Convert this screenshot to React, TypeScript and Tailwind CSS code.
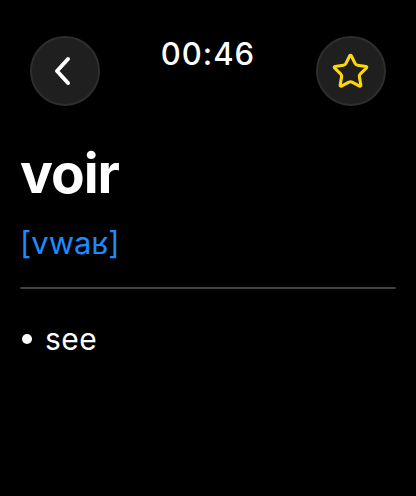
import { Star } from "lucide-react"

const ChevronLeft = () => (
  <svg width="22" height="30" viewBox="0 0 22 30" fill="none">
    <path d="M16 3 L5 15 L16 27" stroke="white" strokeWidth="4" strokeLinecap="round" strokeLinejoin="round" />
  </svg>
)

export default function App() {
  return (
    <div
      className="w-[416px] h-[496px] bg-black text-white overflow-hidden"
      style={{ fontFamily: "Inter, 'Liberation Sans', sans-serif" }}
    >
      {/* Top bar */}
      <div className="flex items-start justify-between px-[30px] pt-[36px]">
        <button className="w-[70px] h-[70px] rounded-full bg-[#1f1f1f] border-2 border-[#2e2e2e] flex items-center justify-center pr-[4px]">
          <ChevronLeft />
        </button>
        <div className="mt-[2px] text-[31px] font-medium tracking-[1px] leading-none">
          00:46
        </div>
        <button className="w-[70px] h-[70px] rounded-full bg-[#1f1f1f] border-2 border-[#2e2e2e] flex items-center justify-center">
          <Star className="w-[39px] h-[39px] text-[#ffd60a]" strokeWidth={1.9} strokeLinejoin="miter" />
        </button>
      </div>

      {/* Word */}
      <div className="px-[20px] mt-[40px]">
        <h1 className="text-[55px] font-bold leading-none tracking-[-1px]">voir</h1>
        <p className="mt-[26px] text-[31px] leading-none text-[#1a8cff]">[vwaʁ]</p>
        <div className="mt-[29px] h-[2px] bg-[#424242] rounded-full" />
        <div className="mt-[35px] flex items-center gap-[13px] text-[30px] leading-none">
          <span className="w-[10px] h-[10px] rounded-full bg-white ml-[2px]" />
          <span className="tracking-[0.5px]">see</span>
        </div>
      </div>
    </div>
  )
}
